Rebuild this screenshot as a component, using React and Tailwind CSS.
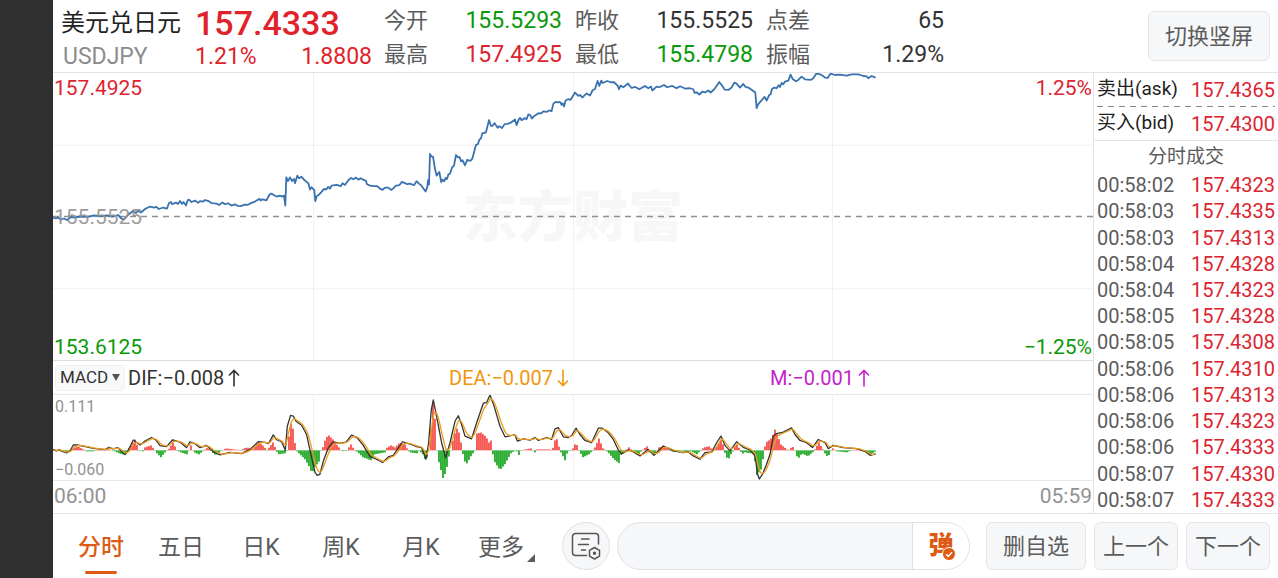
import React, { useState } from 'react';

// minute prices, x y pairs in chart units
const PRICE = `53,218 56,219 58,218 61,220 64,219 67,220.5 71,217.5 75,218 80,217 87,217.3 93,216 100,216.7 107,216 113,217 118,215.5 122,219.5 124,220 128,215.5 133,211.5 136,213.5 138,211.3 141,213 145,209.5 150,207 154,208 156,207.3 159,209.5 163,208 167,209 169,203.5 171,202.5 172,204.5 176,203 178,204.5 180,201.5 182,204.5 183.5,202.5 186,206 187.7,200.7 189,200 191.5,202.5 195,201 198,203.3 200,201.5 203,202 205,200.5 208,201.3 211.5,203.5 216.5,204 219,205.5 222.5,203 225,204.7 228,203.7 231.5,206 235,204.8 237.5,206.3 240.5,206.6 245,205 248,205.3 251.5,203.3 255,202 257.5,200.5 259.5,199.3 260.6,201 262.5,199.7 266.5,200.7 269.5,195 271.5,194 274,195.7 276.6,197 280,196 281.6,197 284,196 285.3,206 286.3,177.7 288,181.5 290,177.7 292,181.5 294,179.3 295,183.5 297.3,176 299,178.5 301.6,177.3 304,180 306.6,182.3 308.3,183.3 310,190 311.6,187.7 314.3,190.6 315.3,201.6 316.6,196.6 318.3,195.7 321.6,192.3 324,189.3 326,190 328.3,187.3 330,189 331.6,186 336.6,185.3 340.6,186.6 342.6,183.6 345,185.3 348.3,180.6 351,178.3 353.3,179.6 356,178 358.3,180 360.6,178.6 363.3,180 366,181.3 367,184.6 370,186 373.3,186.6 377.3,186.6 380,189 382.6,190.3 385,188 388.3,188 391,190.3 393,189 396,186 399.3,185.6 402,182.3 404.3,183.3 407.3,184.6 410,184 414,185.6 416.6,181.6 419,184 421.6,186.3 425.6,192 427.3,187.3 428,180.6 429,185 430,154.3 431.3,156.6 433,157 435,169.3 436.6,176 439.3,172.3 441.3,182.6 442.6,180 444.3,181.6 445.6,178.3 447,179.3 448.3,175 450,174 452.3,167.3 454,166 456,155.3 458,157.6 459.6,157.3 461,161.6 462.6,160.6 465,165.6 467.3,160 469,161 470.6,161 472.3,159 474.3,151.6 476,145 478,144.3 479.3,140 481,138.6 482.3,133.3 484,133.3 486,132.3 487.6,126 489,120.3 491,126 492.6,126 494.6,123.3 497.6,128 499.3,126.3 502,128.3 504.6,124.3 507.3,124 510.6,123 515,119.6 516.6,125.3 518.6,120 520,118 521.6,120.3 525,118.3 526.6,119.3 528.3,114.6 530,115 532,118.6 534,116.3 536.6,114.6 538.6,113.3 541.3,113.6 543.3,111.6 546.6,112 549.3,110.6 551.6,111.3 553.3,104 555.6,102 558,102.4 560,102 561.6,105 562.6,103.3 564,106.6 565.6,100.6 568,99.3 570.6,100 575,92.6 578.3,96 580,95 582.3,97.6 585,95 586.6,93.6 590,95.6 592.6,90.3 595,89 597.6,81 599.3,86 601.3,80.6 602.6,83 607.3,81 610.6,82.3 614,82.3 617.6,85.6 619,89.3 620.6,85.6 623.3,87.3 628,83.6 631.6,88 635.3,87 639.3,89.3 645,86 648.3,88.3 651,86.6 652.3,90.6 656.6,86.6 659.3,87.3 664,85 667.3,87.3 672.3,86 676.6,88.3 680,86.3 685,88.6 690,88.3 693.3,89.3 694.6,93 696.6,92.3 699.3,94.6 702.6,91.6 705,92.6 708.3,90.6 710.6,92.6 714,89.6 716.6,86 719.3,82 722,85.6 724.6,89.6 728.3,90 731.6,87.6 734.3,82.6 736.6,83.6 740,87.6 743.3,84 745.6,87 749,88 752.3,90.3 755.3,92.6 756.6,108.3 758.3,104.3 762.6,99.3 764.6,97 766.6,100.6 769.3,95 770.6,94.3 772,89 774.3,87.6 776.6,88.3 778.6,85.3 780,87 781.6,83 783.3,84.3 785,81.6 788.3,80.6 790.6,74.6 792.6,79 796,81.3 798.3,80 801.6,76.6 805,79.3 810.6,80 813.3,78.3 816,74 818.3,73.6 821.6,75 825,77.6 827.6,78 830.6,73.6 835,75 840,74.6 846.6,75.6 851.6,74.3 858.3,74.3 863.3,76 866.6,76.3 868.3,78.3 871.6,76 875.6,77.7`;

const DIF = `53,450.3 56.6,451.6 59,450.3 63,452.3 66.6,453.6 70,451.6 73.3,445.6 78,445.6 86.6,447.6 93.3,449 98,449.6 105,450.3 109,448 113,449.6 118,448.3 121,451.6 125,455.3 127.6,452.3 133.3,440.6 140,445.6 145,441.6 151.6,438 156,440.6 160,446.3 166.6,447.3 172.6,440.3 180.6,443 186.6,448.3 190,442.3 195,444.3 200,448.3 206.6,446 213.3,452.3 220,455.6 230,453 241.6,454.3 250,450 258.3,442.3 265,443 268.3,444.3 273.3,435.3 276.6,440.3 281.6,442.3 285.3,451 287.3,426.6 290.6,415.6 293.3,416.3 296,421.6 301.6,425.6 306.6,435 311.6,458.3 315,473.3 317.3,476.3 320,475 323.3,462 328.3,448.3 333.3,442.3 340,444 346,442.6 351.6,435.6 357.3,438.3 363.3,446 370,457.3 376.6,460 382.6,463.3 388.3,457.6 393.3,456 402.6,442.3 410,444.6 416.6,447.3 421.6,448.3 426,460 428.6,443.3 431.3,410 433.3,400 436.6,416.6 441.6,443.3 445.6,458.6 450,443.3 455,421.6 458.3,416 461.6,425 465,436.6 471.6,439.3 476.6,423.3 483.3,403.3 486.6,402.6 490,395 494,406 500,426.6 505,437.3 515,435.3 517.3,441.6 523.3,439.3 530,440.6 535,438 538.3,441 546.6,438 551.6,440 555,429.3 558.3,428 563.3,437.3 568.3,438 571.6,436 576,428.6 580,435 585,441 591.6,443.3 598.3,428.6 602.3,428.6 608.3,433.3 613.3,440 618.3,450.6 621.6,454.6 628.3,450.6 633.3,452.6 640,456.6 648.3,450 654,456 663.3,446.6 673.3,451.6 683.3,453.3 688.3,452.6 693.3,456.6 700,460 705,453.3 711.6,452.6 716.6,443.3 721,436.6 725,446 730,451.6 736.6,442.3 743.3,448 750,450.6 755,456.6 757.6,475 759.3,480 762.6,475 766.6,465 770,455 773.3,436.6 776.6,434 783.3,432.6 791.6,428.3 795,435 800,441 806.6,443.3 812.6,448 818.3,440 825,443.3 828.3,449.3 833.3,446 843.3,448.3 856.6,449.3 865,452 870,456 875.6,454.6`;

// histogram outline: x, height above (+) or under (-) the zero line
const HIST = `53,0 66,-2 70,1 77,4 84,0 86,-1 92,-1 94,0 108,1 112,0 118,-3 125,-5 128,2 134,11 138,0 142,-1 144,3 150,5 154,0 156,-3 160,-7 165,-1 167,0 172,8 176,0 180,-2 186,-4 188,0 190,5 193,-2 198,-4 203,0 207,3 211,-2 215,-5 221,0 225,2 240,0 245,3 252,1 257,8 261,6 266,0 272,8 275,1 277,-4 284,-3 285,-11 286,0 288,14 290,27 292,22 295,0 300,-5 304,-9 308,-16 311,-23 314,-17 319,-10 320,0 321,0 325,13 328,15 332,11 338,3 341,-1 346,0 350,6 353,1 357,-2 362,-7 370,-10 374,-4 384,-2 385,2 390,5 394,3 399,8 404,6 407,0 409,-2 416,-3 418,0 422,-4 425,-11 427,-4 428,0 430,22 431,50 433,48 436,0 438,-12 442,-28 445,-22 449,-1 450,0 453,15 456,22 459,16 461,0 465,-15 470,-6 474,0 476,17 480,18 485,14 488,8 490,10 491,0 494,-12 499,-20 504,-14 510,-3 514,0 516,-1 517,-7 520,0 530,2 534,-2 536,1 548,1 551,0 553,5 555,15 559,0 560,-2 564,-10 567,0 571,0 575,8 578,0 582,-7 588,-4 592,0 594,3 598,12 602,2 605,0 608,-3 613,-9 618,-13 621,0 622,-3 625,0 628,3 631,0 638,-4 641,0 646,4 648,-2 654,-4 658,3 664,3 669,0 675,-2 680,0 685,-2 690,-1 696,-4 700,0 703,3 708,4 712,0 716,4 721,12 723,0 727,-10 731,-2 733,0 735,7 739,1 741,-4 744,-2 750,-3 753,-4 756,-25 761,-18 763,0 765,8 768,10 771,13 774,21 777,14 780,6 787,0 789,0 791,5 794,0 797,-9 801,-3 807,-6 813,-1 815,3 818,8 822,1 824,-3 827,-7 830,0 832,2 836,-1 846,-2 850,0 858,1 862,-1 870,-4 876,0`;

const parse = (s) => s.split(' ').map((p) => p.split(',').map(Number));

const valueAt = (pts, x) => {
  const i = pts.findIndex((p) => p[0] >= x);
  if (i <= 0) return pts[0][1];
  const [x0, y0] = pts[i - 1];
  const [x1, y1] = pts[i];
  return y0 + ((y1 - y0) * (x - x0)) / (x1 - x0);
};

const difPts = parse(DIF);
const histPts = parse(HIST);

// the signal line trails DIF
const deaPts = [];
let ema = difPts[0][1];
for (let x = 54; x < 875; x += 1) {
  ema += (valueAt(difPts, x) - ema) * 0.3;
  deaPts.push(`${x},${ema.toFixed(1)}`);
}

const bars = [];
for (let x = 54; x < 875; x += 2) bars.push([x, valueAt(histPts, x)]);

const stats = [
  [['今开', '155.5293', 'text-[#0a990a]'], ['最高', '157.4925', 'text-[#dc2430]']],
  [['昨收', '155.5525', 'text-[#333]'], ['最低', '155.4798', 'text-[#0a990a]']],
  [['点差', '65', 'text-[#333]'], ['振幅', '1.29%', 'text-[#333]']],
];

const ticks = [
  ['00:58:02', '157.4323'],
  ['00:58:03', '157.4335'],
  ['00:58:03', '157.4313'],
  ['00:58:04', '157.4328'],
  ['00:58:04', '157.4323'],
  ['00:58:05', '157.4328'],
  ['00:58:05', '157.4308'],
  ['00:58:06', '157.4310'],
  ['00:58:06', '157.4313'],
  ['00:58:06', '157.4323'],
  ['00:58:06', '157.4333'],
  ['00:58:07', '157.4330'],
  ['00:58:07', '157.4333'],
];

const tabs = ['分时', '五日', '日K', '周K', '月K', '更多'];

const Arrow = ({ down }) => (
  <svg viewBox="0 0 12 18" className={down ? 'w-3 h-[18px] rotate-180' : 'w-3 h-[18px]'} fill="none" stroke="currentColor" strokeWidth="1.6">
    <path d="M6 17.5V1.5M1 6.5l5-5 5 5" />
  </svg>
);

const Header = () => (
  <header className="flex items-center h-[73px] pt-1 pl-2 pr-2 border-b border-[#e3e3e3]">
    <div className="w-[134px] shrink-0 pt-1">
      <h1 className="text-[24px] leading-[34px] text-[#222]">美元兑日元</h1>
      <p className="text-[23px] leading-[34px] text-[#8c8c8c] pl-[2px]">USDJPY</p>
    </div>
    <div className="w-[177px] shrink-0 mr-3 pt-1 text-[#e0222a]">
      <p className="text-[34px] leading-[34px] font-medium">157.4333</p>
      <p className="flex justify-between text-[23px] leading-[34px]">
        <span>1.21%</span>
        <span>1.8808</span>
      </p>
    </div>
    <div className="flex gap-[13px] text-[23px] leading-[34px]">
      {stats.map((group) => (
        <dl key={group[0][0]} className="w-[178px]">
          {group.map(([label, value, color]) => (
            <div key={label} className="flex justify-between">
              <dt className="text-[22px] text-[#5c5c5c]">{label}</dt>
              <dd className={color}>{value}</dd>
            </div>
          ))}
        </dl>
      ))}
    </div>
    <button className="ml-auto mb-1 h-[50px] w-[122px] rounded-md border border-[#e4e6ea] bg-[#f6f7f9] text-[22px] text-[#5c5c5c]">切换竖屏</button>
  </header>
);

const PriceChart = () => (
  <div className="relative h-[288px] text-[21px] leading-[26px] border-b border-[#dcdcdc]">
    <span className="absolute inset-0 flex items-center justify-center text-[55px] font-black text-[#f7f7f7]">东方财富</span>
    <svg viewBox="53 73 1040 288" preserveAspectRatio="none" className="absolute inset-0 w-full h-full" fill="none">
      <path d="M53 145.5H1093M53 289.5H1093M313.5 73V361M573.5 73V361M832.5 73V361" stroke="#f0f0f0" />
      <path d="M53 217H1093" stroke="#909090" strokeWidth="1.5" strokeDasharray="6 5" />
      <polyline points={PRICE} stroke="#3a72b0" strokeWidth="1.8" strokeLinejoin="round" />
    </svg>
    <span className="absolute left-px top-[2px] text-[#dc2430]">157.4925</span>
    <span className="absolute right-px top-[2px] text-[#dc2430]">1.25%</span>
    <span className="absolute left-px top-[131px] text-[#8f8f8f]/90">155.5525</span>
    <span className="absolute left-px bottom-0 text-[#0a990a]">153.6125</span>
    <span className="absolute right-px bottom-0 text-[#0a990a]">−1.25%</span>
  </div>
);

const MacdChart = () => (
  <>
    <div className="grid grid-cols-[396px_321px_1fr] items-center h-[33px] text-[20px] text-[#333]">
      <div className="flex items-center gap-[3px] pl-[2px]">
        <button className="flex items-center gap-1 h-[26px] w-[70px] justify-center rounded bg-[#f7f8fa] border border-[#f0f1f3] text-[17px]">
          MACD
          <svg viewBox="0 0 8 7" className="w-2 h-[7px]" fill="#555"><path d="M0 0h8L4 7z" /></svg>
        </button>
        <span className="flex items-center gap-1">DIF:−0.008 <Arrow /></span>
      </div>
      <span className="flex items-center gap-1 text-[#f0960f]">DEA:−0.007 <Arrow down /></span>
      <span className="flex items-center gap-1 text-[#c322cc]">M:−0.001 <Arrow /></span>
    </div>
    <div className="relative h-[87px] border-y border-[#e8e8e8] text-[16px] leading-5 text-[#929292]">
      <svg viewBox="53 395 1040 86" preserveAspectRatio="none" className="absolute inset-0 w-full h-full" fill="none">
        <path d="M313.5 395V481M573.5 395V481M832.5 395V481" stroke="#f0f0f0" />
        {bars.map(([x, v]) => (
          <rect key={x} x={x} width="1.9" y={v > 0 ? 451 - v : 451} height={Math.max(Math.abs(v), 0.5)} fill={v > 0 ? '#f55a55' : '#2fae35'} />
        ))}
        <polyline points={DIF} stroke="#333" strokeWidth="1.3" strokeLinejoin="round" />
        <polyline points={deaPts.join(' ')} stroke="#eb9c1c" strokeWidth="1.3" strokeLinejoin="round" />
      </svg>
      <span className="absolute left-[2px] top-[2px]">0.111</span>
      <span className="absolute left-[2px] bottom-0">−0.060</span>
    </div>
    <div className="flex items-center justify-between h-8 px-px text-[21px] text-[#929292]">
      <span>06:00</span>
      <span>05:59</span>
    </div>
  </>
);

const Quotes = () => (
  <aside className="w-[185px] shrink-0 border-l border-[#e3e3e3] text-[20px] flex flex-col">
    <div className="flex items-center justify-between h-[33px] pl-[3px] pr-[3px]">
      <span className="text-[19px] text-[#222]">卖出(ask)</span>
      <span className="text-[#dc2430]">157.4365</span>
    </div>
    <div className="h-px mx-[3px] bg-[repeating-linear-gradient(90deg,#888_0_6px,transparent_6px_11px)]" />
    <div className="flex items-center justify-between h-[34px] pl-[3px] pr-[3px] border-b border-[#e3e3e3]">
      <span className="text-[19px] text-[#222]">买入(bid)</span>
      <span className="text-[#dc2430]">157.4300</span>
    </div>
    <h2 className="text-center text-[19px] leading-[31px] text-[#5c5c5c]">分时成交</h2>
    <table className="w-full h-[341px] leading-6">
      <tbody>
        {ticks.map(([time, price], i) => (
          <tr key={i}>
            <td className="pl-[3px] text-[#5c5c5c]">{time}</td>
            <td className="pr-[3px] text-right text-[#dc2430]">{price}</td>
          </tr>
        ))}
      </tbody>
    </table>
  </aside>
);

const BottomBar = () => {
  const [active, setActive] = useState('分时');
  const [text, setText] = useState('');
  const btn = 'h-12 rounded-md border border-[#e4e6ea] bg-[#f6f7f9] text-[22px] text-[#5c5c5c]';

  return (
    <footer className="flex items-center h-[65px] pl-2 pr-2 border-t border-[#e3e3e3]">
      <nav className="grid grid-cols-6 w-[480px] h-full shrink-0 text-[23px]">
        {tabs.map((tab) => (
          <button key={tab} onClick={() => setActive(tab)} className={`relative pt-1 ${active === tab ? 'text-[#dd5a14] font-medium' : 'text-[#5c5c5c]'}`}>
            {tab}
            {active === tab && <span className="absolute left-6 bottom-1 w-8 h-[3px] rounded-full bg-[#dd5a14]" />}
            {tab === '更多' && (
              <svg viewBox="0 0 8 8" className="absolute right-[6px] bottom-4 w-2 h-2" fill="#5c5c5c"><path d="M8 0v8H0z" /></svg>
            )}
          </button>
        ))}
      </nav>
      <button aria-label="设置" className="ml-[21px] w-12 h-12 shrink-0 rounded-full border border-[#dfe1e5] bg-[#f6f7f9] flex items-center justify-center">
        <svg viewBox="0 0 30 28" className="w-[30px] h-7" fill="none" stroke="#555" strokeWidth="1.5" strokeLinecap="round" strokeLinejoin="round">
          <path d="M27.5 12V4.5a3 3 0 0 0-3-3h-20a3 3 0 0 0-3 3v16a3 3 0 0 0 3 3h11" />
          <path d="M10.5 7H18M7.500 12.500h10M10.500 18h4" />
          <path d="M23.5 15.5l5 2.900v5.700l-5 2.900-5-2.900v-5.700z" />
          <circle cx="23.5" cy="21.2" r="1" fill="#555" />
        </svg>
      </button>
      <div className="ml-[7px] flex-1 min-w-0 h-12 flex rounded-full border border-[#dfe1e5] bg-[#f6f7f9] overflow-hidden">
        <input aria-label="弹幕" value={text} onChange={(e) => setText(e.target.value)} className="flex-1 min-w-0 px-5 text-[20px] outline-none bg-transparent" />
        <button className="relative w-[57px] shrink-0 bg-white border-l border-[#dfe1e5] text-[25px] font-black text-[#dd5a14]">
          弹
          <svg viewBox="0 0 14 14" className="absolute left-[29px] bottom-[8px] w-[14px] h-[14px]" fill="none">
            <circle cx="7" cy="7" r="6.5" fill="#dd5a14" stroke="#fff" />
            <path d="M4 7.2l2.200 2.200L10 5.200" stroke="#fff" strokeWidth="1.5" />
          </svg>
        </button>
      </div>
      <div className="ml-4 flex gap-2 shrink-0">
        <button className={`${btn} w-[100px]`}>删自选</button>
        <button className={`${btn} w-[84px]`}>上一个</button>
        <button className={`${btn} w-[84px]`}>下一个</button>
      </div>
    </footer>
  );
};

function App() {
  return (
    <div className="flex min-h-screen bg-white font-['Roboto','Noto_Sans_CJK_SC',sans-serif]">
      <div className="w-[53px] shrink-0 bg-[#2f2f2f]" />
      <main className="flex-1 min-w-0 flex flex-col">
        <Header />
        <div className="flex">
          <section className="flex-1 min-w-0">
            <PriceChart />
            <MacdChart />
          </section>
          <Quotes />
        </div>
        <BottomBar />
      </main>
    </div>
  );
}

export default App;
